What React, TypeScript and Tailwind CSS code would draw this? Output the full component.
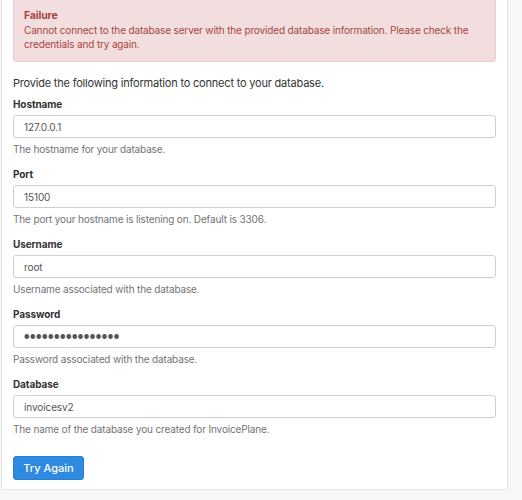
import React from "react";

const fields = [
  { label: "Hostname", value: "127.0.0.1", help: "The hostname for your database." },
  { label: "Port", value: "15100", help: "The port your hostname is listening on. Default is 3306." },
  { label: "Username", value: "root", help: "Username associated with the database." },
  { label: "Password", value: "●●●●●●●●●●●●●●●●", help: "Password associated with the database.", pw: true },
  { label: "Database", value: "invoicesv2", help: "The name of the database you created for InvoicePlane." },
];

export default function App() {
  return (
    <div className="w-[522px] h-[500px] overflow-hidden bg-[#f7f7f7] font-['Inter','Liberation_Sans',sans-serif] text-[11px] leading-[14px] tracking-[-0.2px] text-[#333]">
      <div className="ml-[1px] -mt-[6px] w-[507px] bg-white border border-[#e2e2e2] rounded-[3px] px-[11px] pb-[9px]">
        <div className="bg-[#f2dede] border border-[#ebccd1] rounded-[3px] pt-[13px] pb-[10px] px-[10px] text-[#a94442] text-[10px] tracking-[-0.15px]">
          <div className="font-bold text-[10.5px]">Failure</div>
          <div>
            Cannot connect to the database server with the provided database information. Please check the credentials and try again.
          </div>
        </div>
        <div className="mt-[14px]">Provide the following information to connect to your database.</div>
        {fields.map((f, i) => (
          <div key={f.label} className={i === 0 ? "mt-[7px]" : "mt-[11px]"}>
            <div className="font-bold text-[10px] tracking-[-0.1px]">{f.label}</div>
            <div className="mt-[4px] h-[23px] border border-[#cfcfcf] rounded-[3px] flex items-center px-[10px] text-[#555] text-[10px] tracking-[-0.1px]">
              {f.pw ? (
                <span className="text-[6px] tracking-[0.5px] text-[#555]">{f.value}</span>
              ) : (
                f.value
              )}
            </div>
            <div className="mt-[4px] text-[#737373] text-[10px] tracking-[-0.15px]">{f.help}</div>
          </div>
        ))}
        <button className="mt-[20px] h-[24px] w-[71px] rounded-[3px] bg-[#2e8ae0] border border-[#2a7fd0] text-white text-[11px] font-medium tracking-normal flex items-center justify-center">
          Try Again
        </button>
      </div>
    </div>
  );
}
